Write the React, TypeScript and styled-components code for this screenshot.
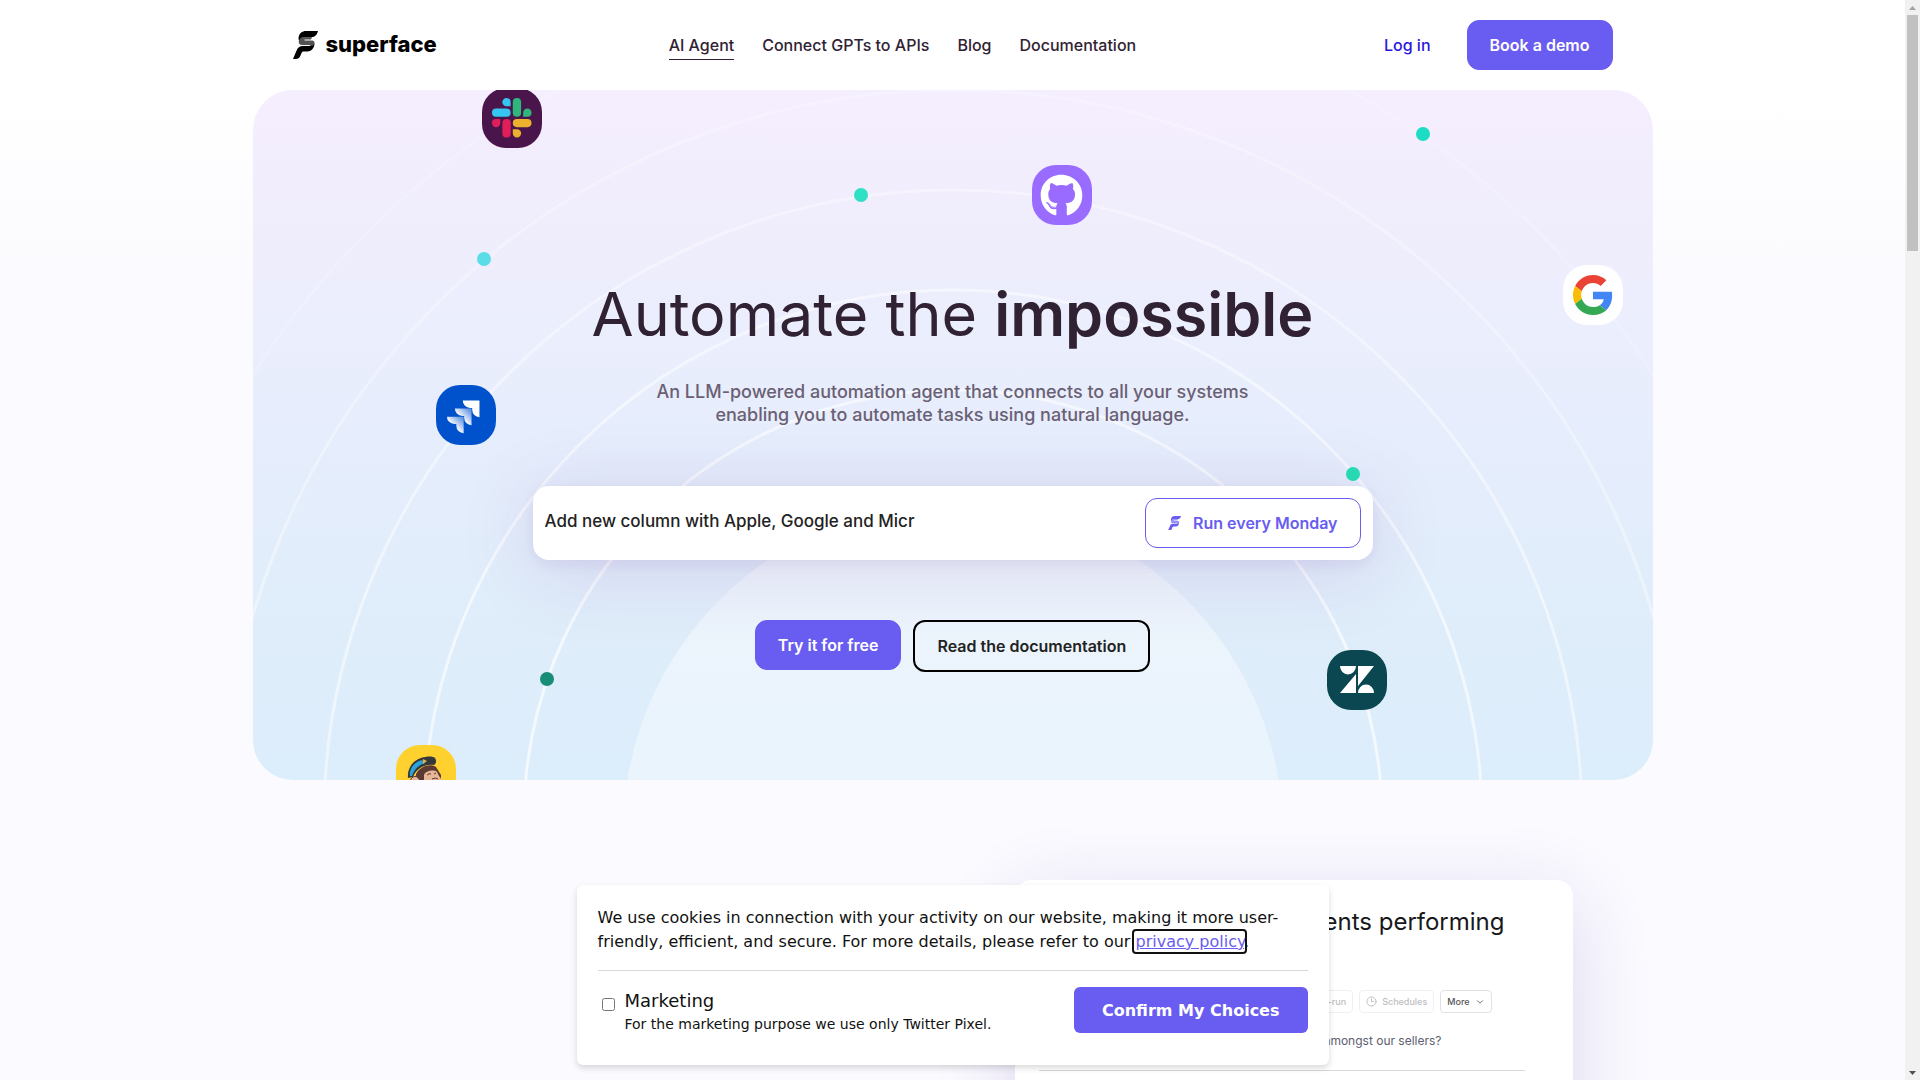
import React from "react";
import styled, { createGlobalStyle } from "styled-components";
import { FaGithub } from "react-icons/fa";
import { LuClock3, LuChevronDown } from "react-icons/lu";

const accent = "#695cf0";
const ink = "#302233";
const sans = `Inter, "Liberation Sans", sans-serif`;

const GlobalStyle = createGlobalStyle`
  *, *::before, *::after { box-sizing: border-box; }
  html, body { margin: 0; height: 100%; overflow: hidden; }
  body { font-family: ${sans}; font-size: 16px; color: ${ink}; background: #fafaff; }
  #root { height: 100%; }
  button, input { font: inherit; }
`;

const Window = styled.div`
  display: grid;
  grid-template-columns: minmax(0, 1fr) 15px;
  height: 100vh;
`;

const Page = styled.div`
  position: relative;
  overflow: hidden;
  background: linear-gradient(180deg, #fff 90px, #fafaff 330px);
`;

const Container = styled.div`
  max-width: 1400px;
  margin: 0 auto;
`;

const Header = styled.header`
  display: flex;
  align-items: center;
  justify-content: space-between;
  height: 90px;
  padding: 0 40px;
`;

const Brand = styled.a`
  display: flex;
  align-items: flex-start;
  gap: 8px;
  color: #000;
  text-decoration: none;
  font-size: 22px;
  font-weight: 800;
  line-height: 26px;
`;

const Nav = styled.nav`
  display: flex;
  gap: 28px;
`;

const NavLink = styled.a<{ $active?: boolean }>`
  color: ${ink};
  font-weight: 500;
  line-height: 28px;
  text-decoration: none;
  border-bottom: 1px solid ${(p) => (p.$active ? ink : "transparent")};
`;

const Account = styled.div`
  display: flex;
  align-items: center;
  gap: 20px;
`;

const LoginLink = styled.a`
  padding: 0 16px;
  color: #2a16dd;
  font-weight: 500;
  text-decoration: none;
`;

const Button = styled.button<{ $kind?: "solid" | "outline" | "dark" }>`
  display: inline-flex;
  align-items: center;
  justify-content: center;
  gap: 12px;
  height: ${(p) => (p.$kind === "dark" ? 52 : 50)}px;
  padding: 0 22px;
  border: ${(p) =>
    p.$kind === "dark" ? "2px solid #000" : `1px solid ${accent}`};
  border-radius: 12px;
  background: ${(p) =>
    p.$kind === "outline" ? "#fff" : p.$kind === "dark" ? "transparent" : accent};
  color: ${(p) =>
    p.$kind === "outline" ? accent : p.$kind === "dark" ? "#222" : "#fff"};
  font-weight: 600;
  white-space: nowrap;
`;

const Hero = styled.section`
  position: relative;
  overflow: hidden;
  height: 690px;
  border-radius: 40px;
  background: linear-gradient(180deg, #f5eeff 0%, #f0edfc 18%, #ebeefd 34%, #e6edfc 50%, #dfedfa 78%, #dcedfb 100%);
`;

const Orbit = styled.div`
  position: absolute;
  top: 0;
  left: 50%;
  width: 1400px;
  height: 690px;
  margin-left: -700px;
`;

const Rings = styled.svg`
  display: block;
`;

const Tile = styled.div<{ $x: number; $y: number; $bg: string }>`
  position: absolute;
  left: ${(p) => p.$x}px;
  top: ${(p) => p.$y}px;
  display: grid;
  place-items: center;
  width: 60px;
  height: 60px;
  border-radius: 24px;
  background: ${(p) => p.$bg};
`;

const Dot = styled.div<{ $x: number; $y: number; $color: string }>`
  position: absolute;
  left: ${(p) => p.$x}px;
  top: ${(p) => p.$y}px;
  width: 14px;
  height: 14px;
  border-radius: 50%;
  background: ${(p) => p.$color};
`;

const HeroContent = styled.div`
  position: relative;
  display: flex;
  flex-direction: column;
  align-items: center;
  padding-top: 184px;
`;

const Title = styled.h1`
  margin: 0;
  font-size: 61px;
  font-weight: 400;
  line-height: 80px;
  b { font-weight: 600; }
`;

const Lead = styled.p`
  margin: 26px 0 60px;
  max-width: 600px;
  color: #6a6073;
  font-size: 18px;
  font-weight: 500;
  line-height: 23px;
  text-align: center;
`;

const Prompt = styled.form`
  display: flex;
  align-items: center;
  width: 60%;
  padding: 12px;
  border-radius: 16px;
  background: #fff;
  box-shadow: 0 10px 80px rgba(90, 30, 140, 0.13), 0 4px 14px rgba(90, 30, 140, 0.08);
`;

const PromptInput = styled.input`
  flex: 1;
  min-width: 0;
  padding: 0 0 4px;
  border: 0;
  outline: 0;
  background: none;
  color: #222;
  font-size: 17px;
  font-weight: 500;
`;

const Actions = styled.div`
  display: flex;
  align-items: flex-start;
  gap: 12px;
  margin-top: 60px;
`;

const Showcase = styled.section`
  display: flex;
  justify-content: flex-end;
  padding: 100px 80px 0;
`;

const AgentCard = styled.article`
  display: flex;
  flex-direction: column;
  align-items: flex-end;
  width: 45%;
  height: 400px;
  padding: 22px 48px 0 24px;
  border-radius: 16px;
  background: #fff;
  box-shadow: 0 20px 80px rgba(80, 40, 150, 0.16);
`;

const AgentTitle = styled.h2`
  margin: 0 20px 0 0;
  color: #18181b;
  font-size: 24px;
  font-weight: 400;
  line-height: 40px;
`;

const Tools = styled.div`
  display: flex;
  gap: 6px;
  margin: 48px 33px 0 0;
`;

const Tool = styled.button<{ $strong?: boolean }>`
  display: flex;
  align-items: center;
  gap: 5px;
  height: 23px;
  padding: 0 6px;
  border: 1px solid ${(p) => (p.$strong ? "#e2e2e6" : "#f0f0f3")};
  border-radius: 4px;
  background: #fff;
  color: ${(p) => (p.$strong ? "#555" : "#bdbdc2")};
  font-size: 9px;
  font-weight: 500;
`;

const Question = styled.p`
  margin: 18px 83px 19px 0;
  color: #5c6070;
  font-size: 12px;
  line-height: 20px;
`;

const Rule = styled.hr`
  width: 100%;
  margin: 0;
  border: 0;
  border-top: 1px solid #d8d8dc;
`;

const Consent = styled.aside`
  position: absolute;
  right: 0;
  bottom: 15px;
  left: 0;
  width: 752px;
  height: 180px;
  margin: 0 auto;
  padding: 21px;
  border-radius: 6px;
  background: #fff;
  box-shadow: 0 3px 6px rgba(0, 0, 0, 0.15);
  color: #111;
  font-family: "DejaVu Sans", sans-serif;
`;

const ConsentText = styled.p`
  margin: 0 0 16px;
  line-height: 24px;
`;

const PolicyLink = styled.a`
  color: ${accent};
  border-radius: 1px;
  outline: 2px solid #111;
  outline-offset: 1px;
`;

const ConsentRow = styled.div`
  display: flex;
  align-items: flex-start;
  justify-content: space-between;
  padding-top: 16px;
`;

const Option = styled.label`
  display: grid;
  grid-template-columns: 13px auto;
  column-gap: 10px;
  padding-left: 4px;
  font-size: 18px;
  line-height: 28px;
  input { width: 13px; height: 13px; margin: 11px 0 0; }
  small { grid-column: 2; font-size: 14px; line-height: 18px; }
`;

const Confirm = styled.button`
  height: 46px;
  padding: 0 28px;
  border: 0;
  border-radius: 6px;
  background: ${accent};
  color: #fff;
  font-weight: 700;
`;

const ScrollTrack = styled.div`
  display: flex;
  flex-direction: column;
  justify-content: space-between;
  padding: 0 2px;
  background: #f1f1f1;
`;

const ScrollThumb = styled.div`
  height: 236px;
  margin-bottom: auto;
  background: #c1c1c1;
`;

const ScrollArrow = styled.svg`
  display: block;
  width: 11px;
  height: 15px;
`;

function Mark({ size, tint = "#000" }: { size: number; tint?: string }) {
  return (
    <svg width={size} height={(size * 28) / 25} viewBox="0 0 25 28" fill={tint} aria-hidden="true">
      <path d="M25 0H13C9 0 6.500 2.200 5.600 6.200C5.400 7.500 5.600 9 6.300 9.600C7.200 7 8.800 6.200 11 6.200H18.500C22 6.200 23.800 4 25 0Z" />
      <path opacity=".68" d="M19 6.200H11C8 6.200 6 8 5.700 10.500C5.500 12.800 7 14 9 14H16.500C17.500 14 17.500 15 16.500 15H19C21 15 21.700 13 21.500 11.500C21.300 10 20 9.600 18.500 9.600H12C11 9.600 11 8.600 12 8.600H18Z" />
      <path d="M21.500 12C21 14.200 19.500 15 17.500 15H10C6.500 15 4.700 16.500 3.600 19.500L0 28H2.500C5.500 28 6.800 26.500 7.700 24L8.600 21.700C9 20.700 9.800 20.400 11 20.400H14.500C18.800 20.400 21.400 17 21.500 12Z" />
    </svg>
  );
}

const SlackLogo = () => (
  <svg width="40" height="40" viewBox="0 0 40 40" aria-hidden="true">
    <g fill="#36c5f0">
      <path d="M14.500 0A4 4 0 0 0 14.500 8.300H18.600V4.100A4.100 4.100 0 0 0 14.500 0Z" />
      <rect x="0" y="10.500" width="18.600" height="8.300" rx="4.100" />
    </g>
    <g fill="#2eb67d">
      <path d="M39.500 14.700A4.100 4.100 0 0 0 31.200 14.700V18.800H35.400A4.100 4.100 0 0 0 39.500 14.700Z" />
      <rect x="20.800" y="0" width="8.300" height="18.800" rx="4.100" />
    </g>
    <g fill="#ecb22e">
      <path d="M25 39.500A4.100 4.100 0 0 0 25 31.200H20.800V35.400A4.100 4.100 0 0 0 25 39.500Z" />
      <rect x="20.800" y="20.900" width="18.700" height="8.300" rx="4.100" />
    </g>
    <g fill="#e01e5a">
      <path d="M0 25A4.100 4.100 0 0 0 8.300 25V20.900H4.100A4.100 4.100 0 0 0 0 25Z" />
      <rect x="10.400" y="20.900" width="8.300" height="18.700" rx="4.100" />
    </g>
  </svg>
);

const GoogleLogo = () => (
  <svg width="40" height="40" viewBox="0 0 48 48" aria-hidden="true">
    <path fill="#ea4335" d="M24 9.500c3.540 0 6.710 1.220 9.210 3.600l6.850-6.850C35.900 2.380 30.470 0 24 0 14.620 0 6.510 5.380 2.560 13.220l7.980 6.190C12.430 13.720 17.740 9.500 24 9.500z" />
    <path fill="#4285f4" d="M46.980 24.550c0-1.570-.15-3.090-.38-4.550H24v9.020h12.940c-.58 2.960-2.260 5.480-4.780 7.180l7.730 6c4.510-4.180 7.090-10.360 7.090-17.650z" />
    <path fill="#fbbc05" d="M10.530 28.590c-.48-1.450-.76-2.990-.76-4.590s.27-3.140.76-4.590l-7.980-6.190C.92 16.460 0 20.120 0 24c0 3.880.92 7.540 2.560 10.780l7.970-6.190z" />
    <path fill="#34a853" d="M24 48c6.480 0 11.930-2.130 15.890-5.810l-7.730-6c-2.150 1.450-4.920 2.300-8.160 2.300-6.260 0-11.570-4.220-13.470-9.910l-7.980 6.190C6.510 42.620 14.620 48 24 48z" />
  </svg>
);

const JiraLogo = () => (
  <svg width="60" height="60" viewBox="-11.300 -15.500 63.500 63.500" aria-hidden="true">
    <defs>
      <linearGradient id="jiraFade" x1="1" y1="0" x2="0.400" y2="0.600">
        <stop offset="0.180" stopColor="#fff" stopOpacity="0.400" />
        <stop offset="1" stopColor="#fff" />
      </linearGradient>
    </defs>
    <path fill="#fff" d="M17 1H34.700V18.500A7.800 7.800 0 0 1 27 10.700V8.800H24.800A7.800 7.800 0 0 1 17 1Z" />
    <path fill="url(#jiraFade)" d="M8.700 9.500H26.300V27A7.800 7.800 0 0 1 18.500 19.200V17.300H16.500A7.800 7.800 0 0 1 8.700 9.500Z" />
    <path fill="url(#jiraFade)" d="M.3 18H18V35.500A7.800 7.800 0 0 1 10.200 27.700V25.800H8.100A7.800 7.800 0 0 1 .3 18Z" />
  </svg>
);

const ZendeskLogo = () => (
  <svg width="34" height="28" viewBox="0 0 34 28" fill="#fff" aria-hidden="true">
    <path d="M0 0H16A8 8.500 0 0 1 0 0ZM16 8V27H0ZM18 27A8 8.500 0 0 1 34 27ZM18 20V0H34Z" />
  </svg>
);

const MailchimpLogo = () => (
  <svg width="60" height="60" viewBox="0 0 60 60" aria-hidden="true">
    <path fill="#5b3a33" d="M20 29C24 21 35 18 40 22L45 30V48H18Z" />
    <path fill="#e8b795" d="M28 30C29 26 38 24 41 27L43 31L46 35V48H28Z" />
    <circle cx="19" cy="36" r="4.500" fill="#e8b795" stroke="#5b3a33" strokeWidth="1" />
    <path fill="#34383d" d="M12 33C11 24 16 16 25 13C31 11 37 11 39 13C41 16 40 19 38 20C29 19 21 23 17 32Z" />
    <path fill="#2aa4dc" d="M14 31C13 24 18 17 26 15L29 18C22 20 18 25 16 31Z" />
    <path fill="#e7b33c" d="M27 14L31 16L27 19Z" />
    <path fill="none" stroke="#5b3a33" d="M31 30Q33 28 35 29M38 29L40 28M36 34Q40 32 42 34" />
  </svg>
);

const orbits = [
  { r: 429, o: 0.65 },
  { r: 529, o: 0.6 },
  { r: 629, o: 0.5 },
  { r: 729, o: 0.38 },
  { r: 829, o: 0.22 },
];

const dots = [
  { x: 1163, y: 37, color: "#1cdcc3" },
  { x: 601, y: 98, color: "#2fe0c5" },
  { x: 224, y: 162, color: "#5adde6" },
  { x: 1093, y: 377, color: "#26dfb5" },
  { x: 287, y: 582, color: "#178c76" },
];

export default function App() {
  return (
    <Window>
      <GlobalStyle />
      <Page>
        <Container>
          <Header>
            <Brand href="#" aria-label="superface">
              <Mark size={25} />
              superface
            </Brand>
            <Nav>
              <NavLink href="#agent" $active>AI Agent</NavLink>
              <NavLink href="#connect">Connect GPTs to APIs</NavLink>
              <NavLink href="#blog">Blog</NavLink>
              <NavLink href="#docs">Documentation</NavLink>
            </Nav>
            <Account>
              <LoginLink href="#login">Log in</LoginLink>
              <Button>Book a demo</Button>
            </Account>
          </Header>
          <Hero>
            <Orbit>
              <Rings width="1400" height="690" viewBox="0 0 1400 690" aria-hidden="true">
                <defs>
                  <linearGradient id="ringFade" gradientUnits="userSpaceOnUse" x1="0" y1="0" x2="0" y2="690">
                    <stop offset="0" stopColor="#fff" stopOpacity="0.600" />
                    <stop offset="0.700" stopColor="#fff" />
                  </linearGradient>
                </defs>
                <circle cx="700" cy="743" r="330" fill="#fff" fillOpacity="0.400" />
                {orbits.map((ring) => (
                  <circle key={ring.r} cx="700" cy="729" r={ring.r} fill="none" stroke="url(#ringFade)" strokeWidth="3" strokeOpacity={ring.o} />
                ))}
              </Rings>
              {dots.map((dot) => (
                <Dot key={dot.color} $x={dot.x} $y={dot.y} $color={dot.color} />
              ))}
              <Tile $x={229} $y={-2} $bg="#4a154b"><SlackLogo /></Tile>
              <Tile $x={779} $y={75} $bg="#9a6bff"><FaGithub size={43} color="#fff" /></Tile>
              <Tile $x={1310} $y={175} $bg="#fff"><GoogleLogo /></Tile>
              <Tile $x={183} $y={295} $bg="#0052cc"><JiraLogo /></Tile>
              <Tile $x={1074} $y={560} $bg="#0a4750"><ZendeskLogo /></Tile>
              <Tile $x={143} $y={655} $bg="#ffd12f"><MailchimpLogo /></Tile>
            </Orbit>
            <HeroContent>
              <Title>Automate the <b>impossible</b></Title>
              <Lead>
                An LLM-powered automation agent that connects to all your systems enabling you to automate tasks using natural language.
              </Lead>
              <Prompt>
                <PromptInput aria-label="Agent instruction" defaultValue="Add new column with Apple, Google and Micr" />
                <Button type="button" $kind="outline">
                  <Mark size={13} tint={accent} />
                  Run every Monday
                </Button>
              </Prompt>
              <Actions>
                <Button>Try it for free</Button>
                <Button $kind="dark">Read the documentation</Button>
              </Actions>
            </HeroContent>
          </Hero>
          <Showcase>
            <AgentCard>
              <AgentTitle>Sales agents performing</AgentTitle>
              <Tools>
                <Tool>Re-run</Tool>
                <Tool><LuClock3 size={11} />Schedules</Tool>
                <Tool $strong>More<LuChevronDown size={10} /></Tool>
              </Tools>
              <Question>amongst our sellers?</Question>
              <Rule />
            </AgentCard>
          </Showcase>
        </Container>
        <Consent>
          <ConsentText>
            We use cookies in connection with your activity on our website, making it more user-friendly, efficient, and secure. For more details, please refer to our <PolicyLink href="#privacy">privacy policy</PolicyLink>.
          </ConsentText>
          <Rule />
          <ConsentRow>
            <Option>
              <input type="checkbox" />
              Marketing
              <small>For the marketing purpose we use only Twitter Pixel.</small>
            </Option>
            <Confirm>Confirm My Choices</Confirm>
          </ConsentRow>
        </Consent>
      </Page>
      <ScrollTrack aria-hidden="true">
        <ScrollArrow viewBox="0 0 11 15"><path fill="#a3a3a3" d="M2 10L5.500 6L9 10Z" /></ScrollArrow>
        <ScrollThumb />
        <ScrollArrow viewBox="0 0 11 15"><path fill="#505050" d="M2 6L5.500 10L9 6Z" /></ScrollArrow>
      </ScrollTrack>
    </Window>
  );
}
